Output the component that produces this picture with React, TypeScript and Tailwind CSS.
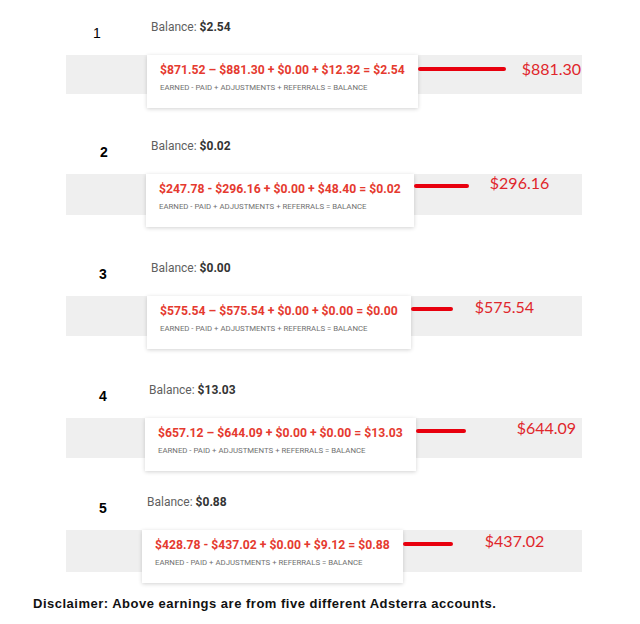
const rows = [
  {
    n: "1",
    nBold: false,
    balance: "$2.54",
    formula: "$871.52 – $881.30 + $0.00 + $12.32 = $2.54",
    paid: "$881.30",
    sec: "pt-[17px]",
    numBox: "ml-[82px]",
    balGap: "ml-[39px]",
    band: "h-[39px]",
    cardMl: "ml-[81px]",
    line: "w-[88px] mt-[12px]",
    paidBox: "ml-[16px] mt-[4px]",
  },
  {
    n: "2",
    nBold: true,
    balance: "$0.02",
    formula: "$247.78 - $296.16 + $0.00 + $48.40 = $0.02",
    paid: "$296.16",
    sec: "mt-[42px]",
    numBox: "ml-[89px]",
    balGap: "ml-[32px]",
    band: "h-[41px]",
    cardMl: "ml-[80px]",
    line: "w-[55px] mt-[10px]",
    paidBox: "ml-[21px] mt-[-1px]",
  },
  {
    n: "3",
    nBold: true,
    balance: "$0.00",
    formula: "$575.54 – $575.54 + $0.00 + $0.00 = $0.00",
    paid: "$575.54",
    sec: "mt-[43px]",
    numBox: "ml-[88px]",
    balGap: "ml-[33px]",
    band: "h-[40px]",
    cardMl: "ml-[81px]",
    line: "w-[42px] mt-[11px]",
    paidBox: "ml-[22px] mt-[1px]",
  },
  {
    n: "4",
    nBold: true,
    balance: "$13.03",
    formula: "$657.12 – $644.09 + $0.00 + $0.00 = $13.03",
    paid: "$644.09",
    sec: "mt-[44px]",
    numBox: "ml-[88px]",
    balGap: "ml-[31px]",
    band: "h-[40px]",
    cardMl: "ml-[79px]",
    line: "w-[50px] mt-[11px]",
    paidBox: "ml-[51px] mt-[0px]",
  },
  {
    n: "5",
    nBold: true,
    balance: "$0.88",
    formula: "$428.78 - $437.02 + $0.00 + $9.12 = $0.88",
    paid: "$437.02",
    sec: "mt-[34px]",
    numBox: "ml-[88px]",
    balGap: "ml-[29px]",
    band: "h-[42px]",
    cardMl: "ml-[76px]",
    line: "w-[50px] mt-[12px]",
    paidBox: "ml-[32px] mt-[1px]",
  },
];

export default function App() {
  return (
    <div className="w-[640px] h-[624px] bg-white overflow-hidden font-['Roboto',sans-serif]">
      {rows.map((r) => (
        <section key={r.n} className={r.sec}>
          {/* number + balance */}
          <div className="flex items-start h-[20px]">
            <span
              className={`${r.numBox} w-[30px] mt-[6px] text-center text-[14px] leading-[20px] text-black font-['Liberation_Sans',Arial,sans-serif] ${
                r.nBold ? "font-bold" : "font-normal"
              }`}
            >
              {r.n}
            </span>
            <span className={`${r.balGap} text-[12px] leading-[20px] text-[#5f5f5f]`}>
              Balance: <b className="font-bold text-[#333]">{r.balance}</b>
            </span>
          </div>

          {/* grey band with card */}
          <div className={`ml-[66px] mt-[18px] w-[516px] ${r.band} bg-[#efefef] flex items-start`}>
            <div className={`${r.cardMl} shrink-0 h-[53px] bg-white px-[13px] pt-[7px] shadow-[0_1px_4px_rgba(0,0,0,0.18)] relative z-10`}>
              <div className="text-[12.2px] leading-[16px] font-bold text-[#e53a2f] whitespace-nowrap">
                {r.formula}
              </div>
              <div className="mt-[4px] text-[7.8px] leading-[12px] text-[#707070] whitespace-nowrap">
                EARNED - PAID + ADJUSTMENTS + REFERRALS = BALANCE
              </div>
            </div>
            <div className={`${r.line} h-[4px] rounded-full bg-[#e8000e] shrink-0 relative z-20`} />
            <span
              className={`${r.paidBox} text-[16px] leading-[20px] text-[#e0262b] font-['Lato',sans-serif] whitespace-nowrap`}
            >
              {r.paid}
            </span>
          </div>
        </section>
      ))}

      <p className="mt-[22px] ml-[33px] text-[13px] leading-[20px] tracking-[0.5px] font-bold text-[#111] whitespace-nowrap font-['Liberation_Sans',Arial,sans-serif]">
        Disclaimer: Above earnings are from five different Adsterra accounts.
      </p>
    </div>
  );
}
